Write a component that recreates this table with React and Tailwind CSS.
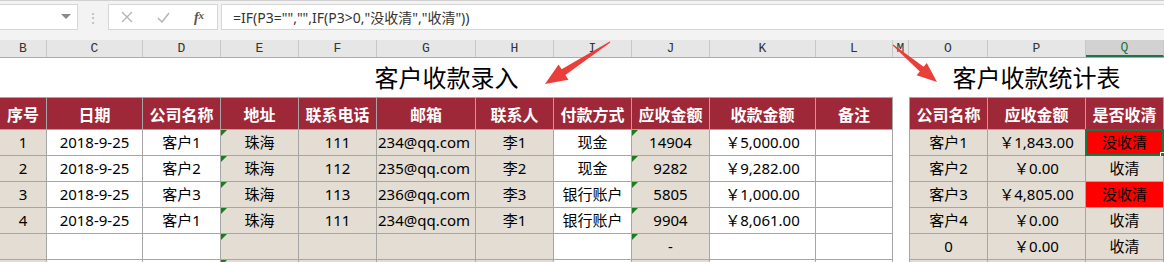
import React from "react";

const CELL_FONT = "font-['Noto_Sans','Noto_Sans_CJK_SC',sans-serif]";
const BEIGE = "bg-[#e3ddd3]";

// left table: B..L
const leftGrid =
  "grid grid-cols-[47px_96px_78px_78px_78px_99px_78px_78px_78px_106px_77px]";
const leftHead = ["序号", "日期", "公司名称", "地址", "联系电话", "邮箱", "联系人", "付款方式", "应收金额", "收款金额", "备注"];
// which columns are white in body rows
const leftWhite = [false, true, true, false, false, false, false, true, false, true, true];
const leftRows = [
  ["1", "2018-9-25", "客户1", "珠海", "111", "234@qq.com", "李1", "现金", "14904", "￥5,000.00", ""],
  ["2", "2018-9-25", "客户2", "珠海", "112", "235@qq.com", "李2", "现金", "9282", "￥9,282.00", ""],
  ["3", "2018-9-25", "客户3", "珠海", "113", "236@qq.com", "李3", "银行账户", "5805", "￥1,000.00", ""],
  ["4", "2018-9-25", "客户1", "珠海", "111", "234@qq.com", "李1", "银行账户", "9904", "￥8,061.00", ""],
  ["", "", "", "", "", "", "", "", "-", "", ""],
  ["", "", "", "", "", "", "", "", "", "", ""],
];

const rightHead = ["公司名称", "应收金额", "是否收清"];
const rightRows = [
  ["客户1", "￥1,843.00", "没收清"],
  ["客户2", "￥0.00", "收清"],
  ["客户3", "￥4,805.00", "没收清"],
  ["客户4", "￥0.00", "收清"],
  ["0", "￥0.00", "收清"],
  ["", "", ""],
];

const colLetters = [
  ["B", "w-[47px]"],
  ["C", "w-[96px]"],
  ["D", "w-[78px]"],
  ["E", "w-[78px]"],
  ["F", "w-[78px]"],
  ["G", "w-[99px]"],
  ["H", "w-[78px]"],
  ["I", "w-[78px]"],
  ["J", "w-[78px]"],
  ["K", "w-[106px]"],
  ["L", "w-[77px]"],
  ["M", "w-[16px]"],
  ["O", "w-[79px]"],
  ["P", "w-[98px]"],
  ["Q", "w-[78px]"],
];

function Flag() {
  // little green comment/error triangle in a cell's corner
  return (
    <span className="absolute left-0 top-0 w-0 h-0 border-t-[6px] border-r-[6px] border-t-[#1a7f1a] border-r-transparent" />
  );
}

function Toolbar() {
  return (
    <div className="h-[40px] bg-[#f3f3f3] flex items-start pt-[3px] border-t border-[#d0d0d0]">
      <div className="w-[78px] h-[26px] bg-white border border-l-0 border-[#d6d6d6] flex items-center justify-end pr-[6px]">
        <svg width="10" height="6" viewBox="0 0 10 6">
          <path d="M0 0 L10 0 L5 5 Z" fill="#8a8a8a" />
        </svg>
      </div>
      <div className="w-[30px] h-[26px] flex items-center justify-center text-[#b8b8b8] text-[14px]">⋮</div>
      <div className="w-[110px] h-[26px] bg-white border border-[#d6d6d6] flex items-center">
        <span className="w-[36px] flex justify-center">
          <svg width="12" height="12" viewBox="0 0 12 12">
            <path d="M1 1 L11 11 M11 1 L1 11" stroke="#b5b5b5" strokeWidth="1.4" />
          </svg>
        </span>
        <span className="w-[36px] flex justify-center">
          <svg width="13" height="11" viewBox="0 0 13 11">
            <path d="M1 6 L5 10 L12 1" stroke="#b5b5b5" strokeWidth="1.5" fill="none" />
          </svg>
        </span>
        <span className="w-[36px] flex justify-center font-['Liberation_Serif',serif] italic font-bold text-[14px] text-[#555]">
          f<span className="text-[11px]">x</span>
        </span>
      </div>
      <div className="ml-[3px] flex-1 h-[26px] bg-white border border-r-0 border-[#d6d6d6] flex items-center pl-[11px] text-[14px] text-[#333] font-['Noto_Sans','Noto_Sans_CJK_SC',sans-serif]">
        =IF(P3="","",IF(P3&gt;0,"没收清","收清"))
      </div>
    </div>
  );
}

function ColumnHeaders() {
  return (
    <div className="h-[18px] bg-[#e6e6e6] border-b border-[#ababab] flex font-['Liberation_Mono',monospace] text-[13px] text-[#333]">
      {colLetters.map(([l, w]) => (
        <div
          key={l}
          className={`${w} shrink-0 flex items-center justify-center border-r border-[#c8c8c8] ${
            l === "Q" ? "bg-[#d2d2d2] text-[#217346] border-b-2 border-b-[#217346]" : ""
          }`}
        >
          {l}
        </div>
      ))}
    </div>
  );
}

function HeadCell({ children }) {
  return (
    <div className="h-[32px] bg-[#9e2837] border-r border-b border-[#a6a6a6] flex items-center justify-center text-white font-bold text-[16px] font-['Noto_Sans_CJK_SC',sans-serif]">
      {children}
    </div>
  );
}

function LeftTable() {
  return (
    <div className={`${leftGrid} border-t border-[#a6a6a6] ${CELL_FONT} text-[15px] text-black`}>
      {leftHead.map((h) => (
        <HeadCell key={h}>{h}</HeadCell>
      ))}
      {leftRows.map((row, r) =>
        row.map((v, c) => (
          <div
            key={`${r}-${c}`}
            className={`relative h-[26px] border-r border-b border-[#a6a6a6] flex items-center overflow-hidden whitespace-nowrap ${
              leftWhite[c] ? "bg-white" : BEIGE
            } ${c === 5 ? "justify-start pl-[1px]" : "justify-center"}`}
          >
            {(c === 3 || (c === 8 && r < 5)) && <Flag />}
            {v}
          </div>
        ))
      )}
    </div>
  );
}

function RightTable() {
  return (
    <div className={`grid grid-cols-[78px_98px_78px] border-t border-l border-[#a6a6a6] ${CELL_FONT} text-[15px] text-black`}>
      {rightHead.map((h) => (
        <HeadCell key={h}>{h}</HeadCell>
      ))}
      {rightRows.map((row, r) =>
        row.map((v, c) => {
          const red = v === "没收清";
          return (
            <div
              key={`${r}-${c}`}
              className={`relative h-[26px] border-r border-b border-[#a6a6a6] flex items-center justify-center whitespace-nowrap ${
                red ? "bg-[#ff0000]" : BEIGE
              }`}
            >
              {v}
              {r === 0 && c === 2 && (
                <>
                  <span className="absolute -left-px -top-px -right-px -bottom-px border-2 border-[#217346]" />
                  <span className="absolute -right-[4px] -bottom-[4px] w-[7px] h-[7px] bg-[#217346] border border-white" />
                </>
              )}
            </div>
          );
        })
      )}
    </div>
  );
}

function Arrows() {
  return (
    <svg className="absolute left-0 top-0 pointer-events-none" width="1164" height="262">
      <polygon
        points="610.3,42.4 565.4,75.0 568.4,79.7 545,84 558.6,64.5 561.6,69.2 609.7,41.6"
        fill="#ea3e3a"
      />
      <polygon
        points="892.7,45.4 919.8,71.4 916.6,75.2 937,82 926.8,63.0 923.6,66.8 893.3,44.6"
        fill="#ea3e3a"
      />
    </svg>
  );
}

export default function App() {
  return (
    <div className="relative w-[1164px] h-[262px] overflow-hidden bg-white">
      <Toolbar />
      <ColumnHeaders />
      {/* title row */}
      <div className={`h-[39px] flex items-center text-[24px] text-black ${CELL_FONT}`}>
        <div className="w-[893px] text-center">客户收款录入</div>
        <div className="w-[16px]" />
        <div className="w-[255px] text-center">客户收款统计表</div>
      </div>
      <div className="flex items-start">
        <LeftTable />
        <div className="w-[16px] shrink-0" />
        <RightTable />
      </div>
      <Arrows />
    </div>
  );
}
